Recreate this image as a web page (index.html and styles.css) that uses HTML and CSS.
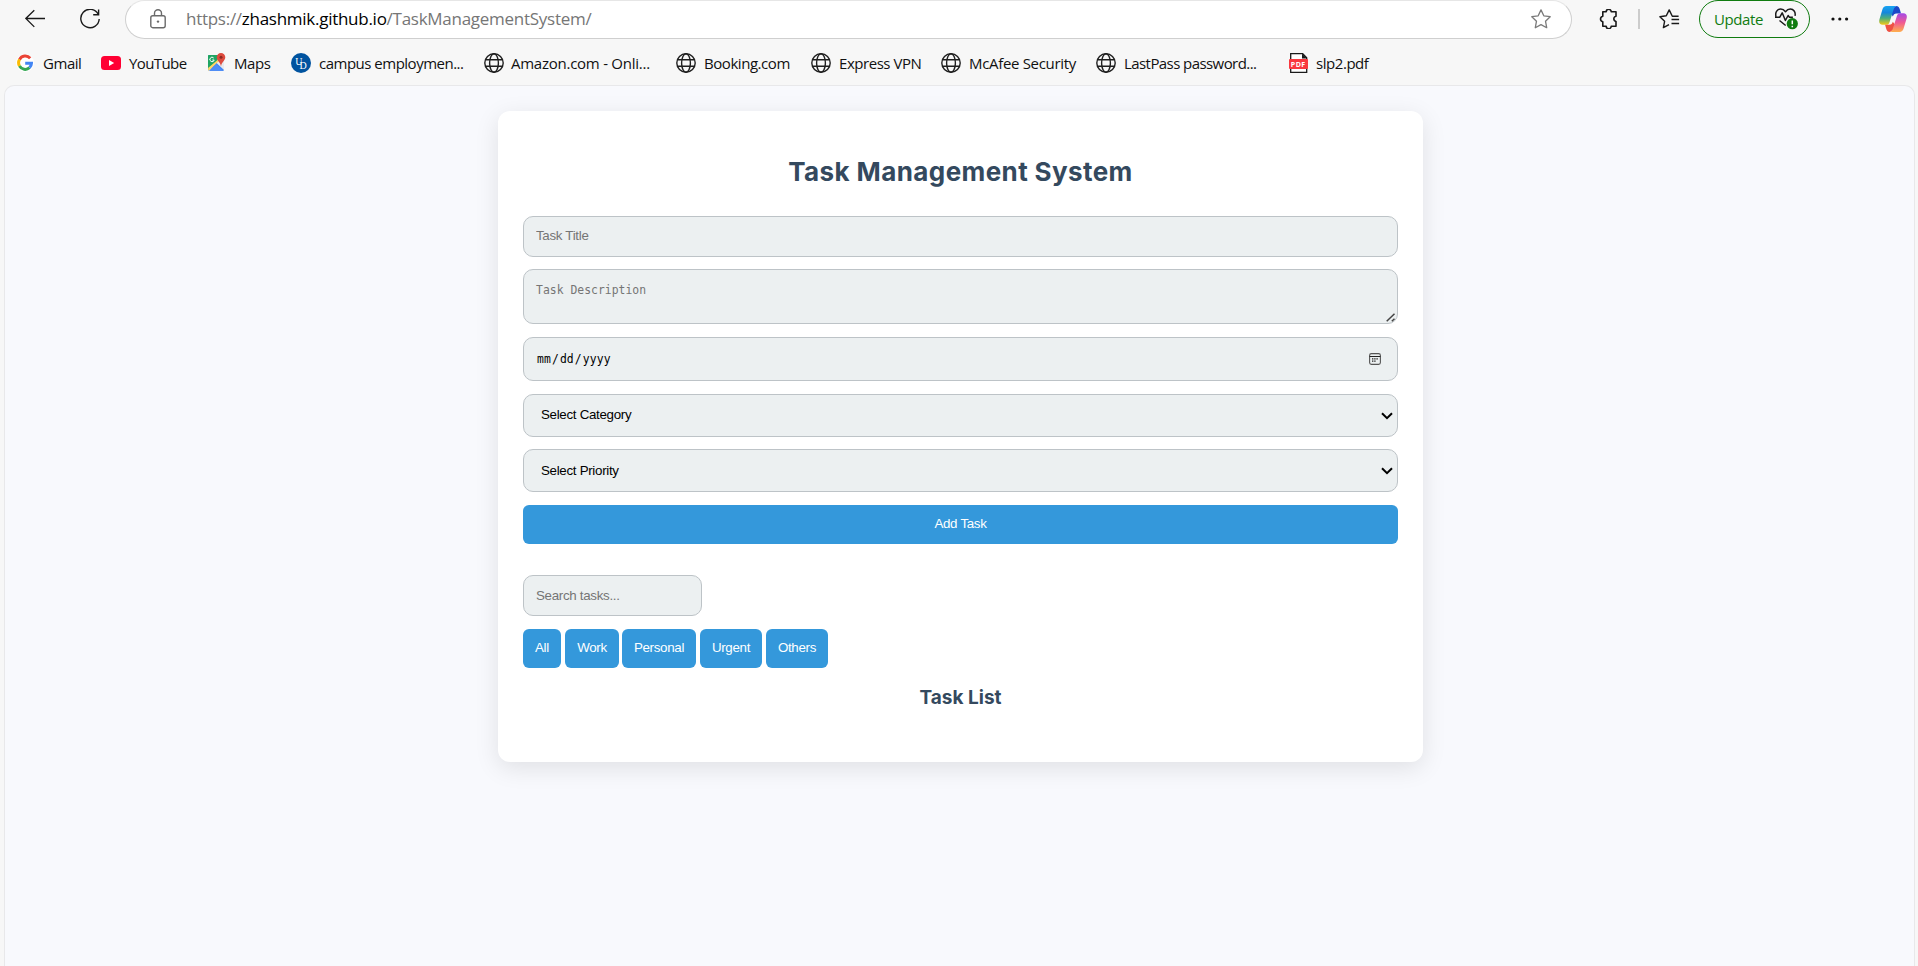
FILE: index.html
```html
<!DOCTYPE html>
<html lang="en-US">
<head>
<meta charset="utf-8">
<title>Task Management System</title>
<link rel="stylesheet" href="styles.css">
</head>
<body>
<svg class="defs" width="0" height="0">
  <defs>
    <symbol id="globe" viewBox="0 0 20 20">
      <g fill="none" stroke="#1f1f1f" stroke-width="1.4"><circle cx="10" cy="10" r="9.2"/><ellipse cx="10" cy="10" rx="4.4" ry="9.2"/><path d="M1.4 6.7h17.2M1.4 13.3h17.2"/></g>
    </symbol>
    <linearGradient id="cop1" x1="0" y1="0" x2="0" y2="1"><stop offset="0" stop-color="#18a4f2"/><stop offset=".35" stop-color="#1587dc"/><stop offset=".65" stop-color="#4cae7c"/><stop offset="1" stop-color="#f4c914"/></linearGradient>
    <linearGradient id="cop2" x1="0" y1="0" x2="0" y2="1"><stop offset="0" stop-color="#a349e8"/><stop offset=".5" stop-color="#f05a93"/><stop offset="1" stop-color="#ffb04c"/></linearGradient>
  </defs>
</svg>
<header class="browser">
  <div class="toolbar">
    <svg class="back" width="20" height="20" viewBox="0 0 20 20" fill="none" stroke="#1a1a1a" stroke-width="1.3"><path d="M9.3 1.3.8 9.5l8.500 8.400M.8 9.500H20"/></svg>
    <svg class="reload" width="20" height="20" viewBox="0 0 20 20" fill="none" stroke="#1a1a1a" stroke-width="1.4"><path d="M18.2 5.3A9.2 9.2 0 1 0 19.2 10M18.6.4v5.3h-5.4"/></svg>
    <div class="address">
      <svg class="lock" width="16" height="20" viewBox="0 0 16 20" fill="none" stroke="#6a6a6a" stroke-width="1.4"><rect x=".8" y="6.7" width="14.4" height="12" rx="2"/><path d="M4.500 6.500V4.200a3.500 3.500 0 0 1 7 0v2.300"/><circle cx="8" cy="12.6" r="1.2" fill="#6a6a6a" stroke="none"/></svg>
      <div class="url">https://<span class="host">zhashmik.github.io</span>/TaskManagementSystem/</div>
      <svg class="star" width="20" height="20" viewBox="0 0 20 20" fill="none" stroke="#7a7a7a" stroke-width="1.3" stroke-linejoin="round"><path d="m10 .9 2.8 5.9 6.4.9-4.7 4.5 1.2 6.5L10 15.6l-5.7 3.1 1.2-6.5L.8 7.7l6.4-.9z"/></svg>
    </div>
    <svg class="puzzle" width="19" height="20" viewBox="0 0 19 20" fill="none" stroke="#1a1a1a" stroke-width="1.6" stroke-linejoin="round"><path d="M3.8 2.8h3.4a2.5 2.5 0 0 1 5 0h4.8v4.4a2.7 2.7 0 0 0 0 5.3v4.7h-4.8a2.5 2.5 0 0 1-5 0H3.8v-4.4a2.8 2.8 0 0 1 0-5.5z"/></svg>
    <span class="divider"></span>
    <svg class="favs" width="21" height="20" viewBox="0 0 21 20" fill="none" stroke="#1a1a1a" stroke-width="1.4" stroke-linejoin="round"><path d="M19.6 7.2h-6.3L10.2.9 7.3 6.8l-6.4.9 4.7 4.6-1.2 6.3 5.6-2.9M12.5 10.5h7.6M12.5 14.5h7.6"/></svg>
    <div class="update">
      <span>Update</span>
      <svg width="24" height="22" viewBox="0 0 24 22" fill="none" stroke="#1a1a1a" stroke-width="1.5" stroke-linejoin="round"><path d="M1 8.5C-.2 4.3 2.5 1 5.7 1c2 0 3.4.9 4.8 2.7C11.9 1.9 13.3 1 15.3 1c3.2 0 5.600 3.1 4.7 6.900M0 9.2h4.8l2.4-4.4 3.2 7.7 2.7-5 1.3 1.7h3.5M4.5 12.5l6.2 5"/><circle cx="17.3" cy="15.7" r="5.6" fill="#107c10" stroke="none"/><path d="M17.3 12.500v3.800m0 1.400v1.500" stroke="#fff" stroke-linejoin="miter"/></svg>
    </div>
    <svg class="dots" width="18" height="4" viewBox="0 0 18 4" fill="#111"><circle cx="2" cy="2" r="1.6"/><circle cx="8.8" cy="2" r="1.6"/><circle cx="15.6" cy="2" r="1.6"/></svg>
    <svg class="copilot" width="28" height="26" viewBox="0 0 28 26"><path d="M17 0c2.5 0 3.2 1.6 4 4l1 3.5h-4.5c-2 0-3 1.2-3.600 3L10 5z" fill="#1b48c8"/><path d="M7.5 0H18c-2 0-2.8 1.6-3.4 3.5l-4 12.5c-.6 2-1.500 2.8-3.600 2.8H3.5C.8 18.8-.4 16.5.4 13.5L3.4 3.500C4.1 1.200 5.300 0 7.500 0z" fill="url(#cop1)"/><path d="M11 26c-2.500 0-3.300-1.600-4-4l-.9-3.300h4.200c2 0 3-1.200 3.500-3L18 21z" fill="#ee5143"/><path d="M20.500 26H10.500c2 0 2.800-1.600 3.400-3.500l4-12.500c.6-2 1.500-2.800 3.600-2.800h3c2.700 0 3.900 2.300 3.100 5.300l-3 10c-.7 2.300-1.900 3.500-4.100 3.500z" fill="url(#cop2)"/></svg>
  </div>
  <nav class="bookmarks">
    <a class="bm gmail"><svg width="18" height="20" viewBox="0 0 18 20"><rect x="0" y="1" width="18" height="18" rx="9" fill="#fff"/><g fill="none" stroke-width="3"><path d="M14.2 5.2A6.500 6.500 0 0 0 3.500 6.600" stroke="#ea4335"/><path d="M3.500 6.600a6.500 6.500 0 0 0 0 6.500" stroke="#fbbc05"/><path d="M3.500 13.100a6.500 6.500 0 0 0 10 1.600" stroke="#34a853"/><path d="M13.500 14.700a6.300 6.300 0 0 0 2-4.400H9.200" stroke="#4285f4"/></g></svg><span>Gmail</span></a>
    <a class="bm youtube"><svg width="20" height="20" viewBox="0 0 20 20"><rect y="3" width="20" height="14" rx="3.5" fill="#ff0033"/><path d="m8 7 5.200 3L8 13z" fill="#fff"/></svg><span>YouTube</span></a>
    <a class="bm maps"><svg width="19" height="20" viewBox="0 0 19 20"><rect x="1" y="2" width="16" height="16" rx="1.5" fill="#4285f4"/><path d="M1 3.500C1 2.500 1.500 2 2.500 2H13L1 17z" fill="#1fa463"/><path d="M1 17 14 4l3 3v10L9 9.500 2 18z" fill="#e8eaed"/><path d="M1 14.500 11.500 4 14 6 1.500 18z" fill="#fdd663"/><path d="m2.500 18 6.700-6.700L16 18z" fill="#4f8df5"/><path d="M1 3.500C1 2.500 1.500 2 2.500 2h8v5L1 15z" fill="#1fa463"/><path d="M6.700 5a2.200 2.200 0 1 0 .5 2H5.300" fill="none" stroke="#fff"/><path d="M14 0a4.300 4.300 0 0 1 4.300 4.300c0 3.200-3.300 4.200-4.300 9-1-4.800-4.300-5.800-4.300-9A4.300 4.300 0 0 1 14 0z" fill="#dd4b3e"/><circle cx="14" cy="4.300" r="1.500" fill="#8c2a22"/></svg><span>Maps</span></a>
    <a class="bm campus"><svg width="20" height="20" viewBox="0 0 20 20"><circle cx="10" cy="10" r="10" fill="#00539f"/><text class="ud" x="4.2" y="11.5">U<tspan x="8.4" y="16.2">D</tspan></text></svg><span>campus employmen...</span></a>
    <a class="bm amazon"><svg width="20" height="20"><use href="#globe"/></svg><span>Amazon.com - Onli...</span></a>
    <a class="bm booking"><svg width="20" height="20"><use href="#globe"/></svg><span>Booking.com</span></a>
    <a class="bm vpn"><svg width="20" height="20"><use href="#globe"/></svg><span>Express VPN</span></a>
    <a class="bm mcafee"><svg width="20" height="20"><use href="#globe"/></svg><span>McAfee Security</span></a>
    <a class="bm lastpass"><svg width="20" height="20"><use href="#globe"/></svg><span>LastPass password...</span></a>
    <a class="bm pdf"><svg width="20" height="20" viewBox="0 0 20 20"><path d="M1.700.7h12l4 4v14.600h-16z" fill="#fff" stroke="#1a1a1a" stroke-width="1.3"/><path d="M13 .5v5h5z" fill="#1a1a1a"/><rect x="0" y="6" width="19" height="10" rx="1" fill="#f9393f"/><text class="pdf-mark" x="1.8" y="13.7">PDF</text></svg><span>slp2.pdf</span></a>
  </nav>
</header>
<main class="page">
  <div class="container">
    <h1>Task Management System</h1>
    <form class="task-form">
      <input class="field" type="text" placeholder="Task Title">
      <div class="wrap area-wrap">
        <textarea class="field" placeholder="Task Description"></textarea>
        <svg class="grip" width="10" height="9" viewBox="0 0 10 9" stroke="#444" stroke-width="1.5"><path d="M.7 8.300 8.500.7M5.800 8.300 8.500 5.700"/></svg>
      </div>
      <div class="wrap date-wrap">
        <input class="field date" type="date">
        <svg class="calendar" width="12" height="12" viewBox="0 0 12 12" fill="none" stroke="#222"><rect x=".6" y=".6" width="10.8" height="10.8" rx="1.8" stroke="#555" stroke-width="1.1"/><path d="M.6 3.500h10.800"/><path d="M3 5.900h6.200M3 8.200h4.200" stroke-width="1.300" stroke-dasharray="1.400 .8"/></svg>
      </div>
      <div class="wrap">
        <select class="field category"><option>Select Category</option></select>
        <svg class="chevron" width="12" height="8" viewBox="0 0 12 8" fill="none" stroke="#000" stroke-width="2"><path d="M1 1.200 6 6.200l5-5"/></svg>
      </div>
      <div class="wrap">
        <select class="field priority"><option>Select Priority</option></select>
        <svg class="chevron" width="12" height="8" viewBox="0 0 12 8" fill="none" stroke="#000" stroke-width="2"><path d="M1 1.200 6 6.200l5-5"/></svg>
      </div>
      <button class="btn add" type="button">Add Task</button>
    </form>
    <input class="field search" type="text" placeholder="Search tasks...">
    <div class="filters">
      <button class="btn all">All</button>
      <button class="btn work">Work</button>
      <button class="btn personal">Personal</button>
      <button class="btn urgent">Urgent</button>
      <button class="btn others">Others</button>
    </div>
    <h2>Task List</h2>
  </div>
</main>
</body>
</html>
```
FILE: styles.css
```css
* { box-sizing: border-box; }
html, body { height: 100%; }
body {
  margin: 0;
  height: 966px;
  overflow: hidden;
  display: flex;
  flex-direction: column;
  background: #f7f7f7;
  font-family: "Open Sans", "Noto Sans", sans-serif;
}
svg { flex: none; display: block; }
.defs { position: absolute; }

.browser { height: 85px; flex: none; }
.toolbar { display: flex; align-items: center; height: 38px; }
.back { margin-left: 25px; }
.reload { margin-left: 35px; }
.address {
  display: flex;
  align-items: center;
  width: 1447px;
  height: 39px;
  margin-left: 25px;
  padding: 0 20px 0 24px;
  border: 1px solid #cfcfcf;
  border-top-color: #e6e6e6;
  border-radius: 20px;
  background: #fff;
}
.url {
  flex: 1;
  margin-left: 20px;
  font-size: 17px;
  letter-spacing: -0.27px;
  line-height: 24px;
  color: #767676;
  white-space: nowrap;
}
.host { color: #000; }
.puzzle { margin-left: 27px; }
.divider { width: 2px; height: 20px; margin-left: 20px; background: #ccc; }
.favs { margin-left: 19px; }
.update {
  display: flex;
  align-items: center;
  justify-content: space-between;
  width: 111px;
  height: 38px;
  margin: 0 0 0 19px;
  padding: 0 10px 0 14px;
  border: 1px solid #107c10;
  border-radius: 19px;
  color: #107c10;
  font-size: 15px;
  letter-spacing: -0.4px;
}
.dots { margin-left: 21px; }
.copilot { margin-left: 30px; }

.bookmarks {
  display: flex;
  align-items: center;
  height: 22px;
  margin-top: 14px;
  padding-left: 16px;
}
.bm { display: flex; align-items: center; font-size: 15px; letter-spacing: -0.45px; line-height: 22px; white-space: nowrap; color: #111; }
.gmail { width: 85px; gap: 9px; }
.youtube { width: 106px; gap: 8px; letter-spacing: -0.6px; }
.maps { width: 84px; gap: 8px; }
.campus { width: 193px; gap: 8px; letter-spacing: -0.5px; }
.amazon { width: 192px; gap: 7px; letter-spacing: -0.25px; }
.booking { width: 135px; gap: 8px; }
.vpn { width: 130px; gap: 8px; }
.mcafee { width: 155px; gap: 8px; letter-spacing: -0.32px; }
.lastpass { width: 193px; gap: 8px; letter-spacing: -0.57px; }
.pdf { gap: 7px; }
.ud { font: 10px "Liberation Serif", serif; fill: #fff; letter-spacing: 0; }
.pdf-mark { font: bold 7px "Open Sans", sans-serif; fill: #fff; letter-spacing: 0.5px; }

.page {
  flex: 1;
  margin: 0 3px 0 4px;
  padding-top: 25px;
  border: 1px solid #e8e8ea;
  border-bottom: 0;
  border-radius: 10px 10px 0 0;
  background: #f8f9fd;
}
.container {
  width: 925px;
  height: 651px;
  margin: 0 auto 0 493px;
  padding: 40px 25px 25px;
  border-radius: 12px;
  background: #fff;
  box-shadow: 0 6px 25px rgba(0, 0, 0, 0.1);
}
h1, h2 { margin: 0; text-align: center; color: #34495e; font-family: Inter, "Open Sans", sans-serif; font-weight: 700; }
h1 { height: 65px; font-size: 26px; line-height: 41px; letter-spacing: 0.4px; }
h2 { margin-top: 15px; font-size: 19px; line-height: 30px; }
.task-form { display: flex; flex-direction: column; }
.field {
  display: block;
  width: 100%;
  height: 41px;
  margin: 0 0 12px;
  padding: 0 12px 3px;
  border: 1px solid #bdc3c7;
  border-radius: 10px;
  outline: 0;
  background-color: #ecf0f1;
  color: #000;
  font: 13.333px "Liberation Sans", Arial, sans-serif;
  letter-spacing: -0.3px;
}
.field::placeholder { color: #757575; opacity: 1; }
.wrap { position: relative; }
.area-wrap { height: 68px; }
textarea.field {
  height: 55px;
  padding: 13px 12px;
  resize: none;
  font: 11.4px "DejaVu Sans Mono", monospace;
  letter-spacing: 0.02px;
}
.grip { position: absolute; right: 2px; top: 44px; }
.date { height: 44px; margin-bottom: 13px; padding: 0 12px; font: 11.4px "DejaVu Sans Mono", monospace; letter-spacing: 0.1px; }
.date::-webkit-calendar-picker-indicator { opacity: 0; }
.calendar { position: absolute; right: 17px; top: 16px; }
select.field { appearance: none; height: 43px; padding: 0 17px 3px; }
select.priority { margin-bottom: 13px; padding-bottom: 1px; }
.chevron { position: absolute; right: 5px; top: 18px; }
.btn {
  height: 39px;
  padding: 0 0 2px;
  border: 0;
  border-radius: 6px;
  background: #3498db;
  color: #fff;
  font: 13.333px "Liberation Sans", Arial, sans-serif;
  letter-spacing: -0.3px;
}
.search { width: 179px; margin: 31px 0 13px; padding-bottom: 0; }
.filters { display: flex; }
.all { width: 38px; margin-right: 4px; }
.work { width: 54px; margin-right: 3px; }
.personal { width: 74px; margin-right: 4px; }
.urgent { width: 62px; margin-right: 4px; }
.others { width: 62px; }
```
